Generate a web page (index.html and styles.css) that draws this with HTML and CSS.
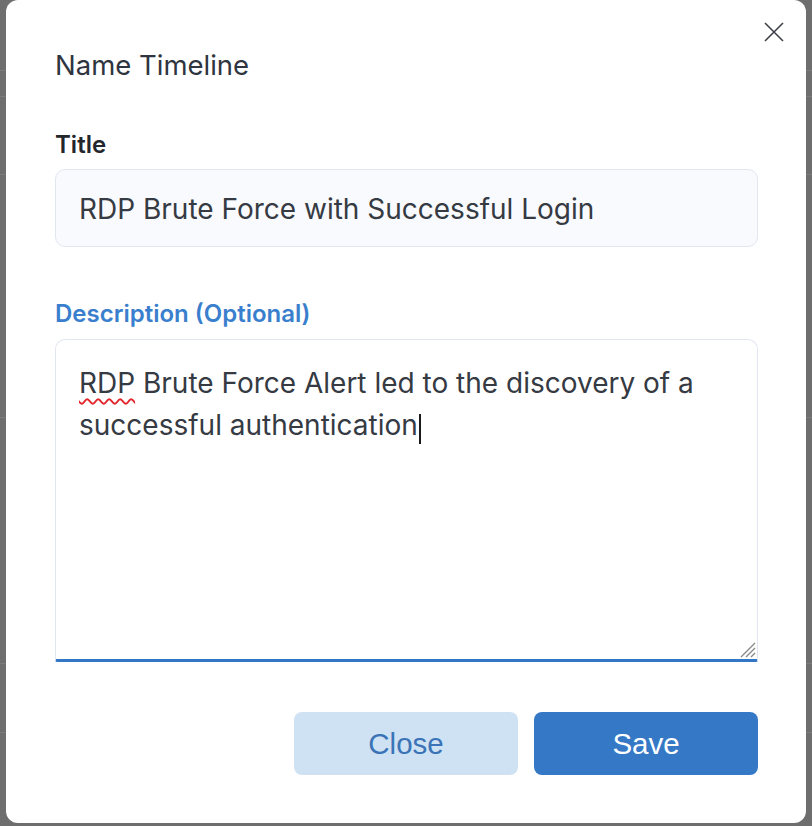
FILE: index.html
```html
<!DOCTYPE html>
<html lang="en">
<head>
<meta charset="utf-8">
<title>Name Timeline</title>
<link rel="stylesheet" href="styles.css">
</head>
<body>
<div class="modal">
  <button class="close-x" aria-label="Close">
    <svg width="20" height="20" viewBox="0 0 20 20"><path d="M1 1L19 19M19 1L1 19" stroke="#3d4047" stroke-width="1.6" fill="none"/></svg>
  </button>
  <h2 class="modal-title">Name Timeline</h2>
  <label class="field-label">Title</label>
  <div class="input">RDP Brute Force with Successful Login</div>
  <label class="field-label active">Description (Optional)</label>
  <div class="textarea">
    <span class="misspelled">RDP</span> Brute Force Alert led to the discovery of a successful authentication<span class="caret"></span>
    <svg class="grip" width="18" height="18" viewBox="0 0 18 18"><path d="M17 3L3 17M17 8L8 17M17 13L13 17" stroke="#8a8a8a" stroke-width="1.4"/></svg>
  </div>
  <div class="actions">
    <button class="btn btn-secondary">Close</button>
    <button class="btn btn-primary">Save</button>
  </div>
</div>
</body>
</html>
```
FILE: styles.css
```css
html, body {
  margin: 0;
  padding: 0;
}
body {
  background-color: #6e6e6e;
  background-image:
    linear-gradient(#7c7c7c, #7c7c7c),
    linear-gradient(#7c7c7c, #7c7c7c),
    linear-gradient(#7c7c7c, #7c7c7c),
    linear-gradient(#7c7c7c, #7c7c7c),
    linear-gradient(#7c7c7c, #7c7c7c),
    linear-gradient(#7c7c7c, #7c7c7c);
  background-size: 100% 1px;
  background-repeat: no-repeat;
  background-position: 0 70px, 0 96px, 0 174px, 0 417px, 0 663px, 0 732px;
  height: 826px;
  overflow: hidden;
  font-family: Inter, "Noto Sans", sans-serif;
}
.modal {
  position: relative;
  box-sizing: border-box;
  margin-left: 6px;
  width: 800px;
  height: 823px;
  background: #ffffff;
  border-radius: 12px;
  padding: 49px 48px 0 49px;
}
.close-x {
  position: absolute;
  top: 22px;
  right: 22px;
  width: 20px;
  height: 20px;
  padding: 0;
  border: 0;
  background: none;
  display: flex;
}
.modal-title {
  margin: 0;
  font-size: 27.5px;
  line-height: 32px;
  font-weight: 400;
  color: #2f3540;
}
.field-label {
  display: block;
  font-size: 24px;
  line-height: 28px;
  font-weight: 600;
  color: #23262b;
  margin-top: 50px;
  margin-bottom: 10px;
}
.field-label.active {
  color: #3a7fcd;
  margin-top: 53px;
  margin-bottom: 11px;
}
.input {
  box-sizing: border-box;
  height: 78px;
  border: 1px solid #e2e6f0;
  border-radius: 10px;
  background: #f9fafd;
  padding: 1px 23px 0;
  display: flex;
  align-items: center;
  font-size: 28px;
  color: #353a43;
}
.textarea {
  position: relative;
  box-sizing: border-box;
  height: 323px;
  border: 1px solid #e2e6f0;
  border-bottom: 3px solid #3277c5;
  border-radius: 10px 10px 2px 2px;
  padding: 22px 23px;
  font-size: 28px;
  line-height: 42px;
  color: #353a43;
}
.misspelled {
  text-decoration: underline wavy #e3262b;
  text-decoration-thickness: 1.5px;
  text-underline-offset: 5px;
}
.caret {
  display: inline-block;
  width: 2px;
  height: 30px;
  background: #1a1a1a;
  vertical-align: -9px;
  margin-left: 1px;
}
.grip {
  position: absolute;
  right: 1px;
  bottom: 1px;
}
.actions {
  display: flex;
  justify-content: flex-end;
  gap: 16px;
  margin-top: 50px;
}
.btn {
  width: 224px;
  height: 63px;
  border: 0;
  border-radius: 8px;
  font-family: "Liberation Sans", Arial, sans-serif;
  font-size: 29.5px;
}
.btn-secondary {
  background: #cfe2f3;
  color: #3a74b7;
}
.btn-primary {
  background: #3478c6;
  color: #ffffff;
}
```
